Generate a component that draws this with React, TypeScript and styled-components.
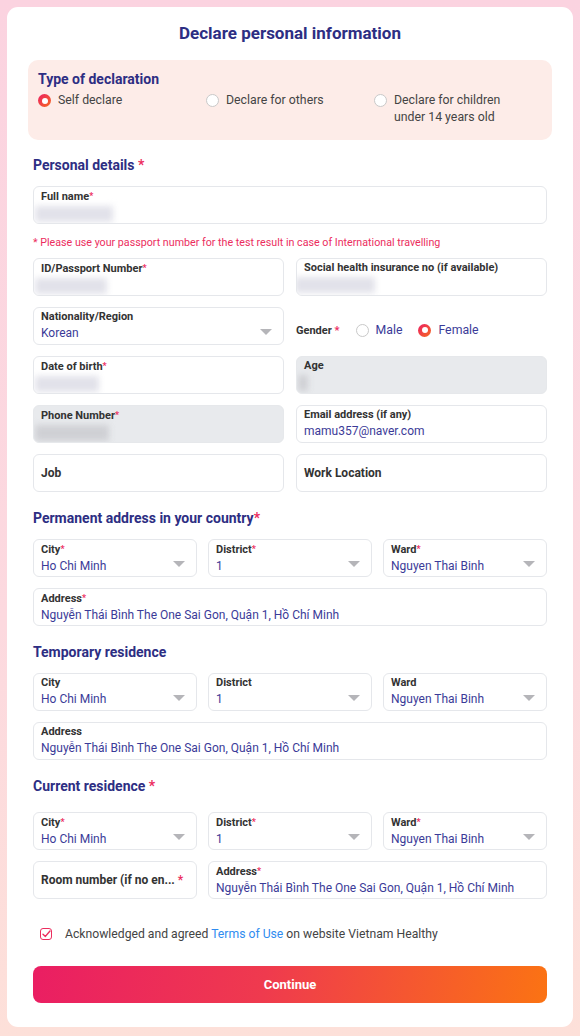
import styled, { createGlobalStyle } from 'styled-components';

const GlobalStyle = createGlobalStyle`
  html, body {
    margin: 0;
    padding: 0;
  }
  body {
    background: linear-gradient(180deg, #fbd3e0 0%, #fcd9df 60%, #fde0d9 100%);
    font-family: Roboto, 'Noto Sans', Arial, sans-serif;
    min-height: 1036px;
  }
`;

const NAVY = '#2d2e83';
const VALUE = '#3b3b98';
const RED = '#ec2d5e';

export default function App() {
  return (
    <>
      <GlobalStyle />
      <Page>
        <Card>
          <Title>Declare personal information</Title>

          <TypeBox>
            <TypeTitle>Type of declaration</TypeTitle>
            <TypeOptions>
              <RadioOption>
                <Radio $checked />
                <span>Self declare</span>
              </RadioOption>
              <RadioOption>
                <Radio />
                <span>Declare for others</span>
              </RadioOption>
              <RadioOption>
                <Radio />
                <span>
                  Declare for children
                  <br />
                  under 14 years old
                </span>
              </RadioOption>
            </TypeOptions>
          </TypeBox>

          <Form>
            <SectionTitle>
              Personal details <Star>*</Star>
            </SectionTitle>
            <Field>
              <Label>
                Full name<Dot>*</Dot>
              </Label>
              <Blur $w={78} />
            </Field>
            <Warning>* Please use your passport number for the test result in case of International travelling</Warning>
            <Row $cols={2}>
              <Field>
                <Label>
                  ID/Passport Number<Dot>*</Dot>
                </Label>
                <Blur $w={72} />
              </Field>
              <Field>
                <Label>Social health insurance no (if available)</Label>
                <Blur $w={80} $shift={-3} />
              </Field>
            </Row>
            <Row $cols={2}>
              <Field>
                <Label>Nationality/Region</Label>
                <Value>Korean</Value>
                <Caret />
              </Field>
              <GenderRow>
                <GenderLabel>
                  Gender <Star>*</Star>
                </GenderLabel>
                <GenderOption>
                  <Radio />
                  <span>Male</span>
                </GenderOption>
                <GenderOption>
                  <Radio $checked />
                  <span>Female</span>
                </GenderOption>
              </GenderRow>
            </Row>
            <Row $cols={2}>
              <Field>
                <Label>
                  Date of birth<Dot>*</Dot>
                </Label>
                <Blur $w={64} />
              </Field>
              <Field $disabled>
                <Label>Age</Label>
                <Blur $w={10} $dark />
              </Field>
            </Row>
            <Row $cols={2}>
              <Field $disabled>
                <Label>
                  Phone Number<Dot>*</Dot>
                </Label>
                <Blur $w={74} $dark />
              </Field>
              <Field>
                <Label>Email address (if any)</Label>
                <Value>mamu357@naver.com</Value>
              </Field>
            </Row>
            <Row $cols={2}>
              <Field $center>
                <Label $big>Job</Label>
              </Field>
              <Field $center>
                <Label $big>Work Location</Label>
              </Field>
            </Row>

            <SectionTitle>
              Permanent address in your country<Star>*</Star>
            </SectionTitle>
            <Row $cols={3}>
              <Field>
                <Label>
                  City<Dot>*</Dot>
                </Label>
                <Value>Ho Chi Minh</Value>
                <Caret />
              </Field>
              <Field>
                <Label>
                  District<Dot>*</Dot>
                </Label>
                <Value>1</Value>
                <Caret />
              </Field>
              <Field>
                <Label>
                  Ward<Dot>*</Dot>
                </Label>
                <Value>Nguyen Thai Binh</Value>
                <Caret />
              </Field>
            </Row>
            <Field>
              <Label>
                Address<Dot>*</Dot>
              </Label>
              <Value>Nguyễn Thái Bình The One Sai Gon, Quận 1, Hồ Chí Minh</Value>
            </Field>

            <SectionTitle>Temporary residence</SectionTitle>
            <Row $cols={3}>
              <Field>
                <Label>City</Label>
                <Value>Ho Chi Minh</Value>
                <Caret />
              </Field>
              <Field>
                <Label>District</Label>
                <Value>1</Value>
                <Caret />
              </Field>
              <Field>
                <Label>Ward</Label>
                <Value>Nguyen Thai Binh</Value>
                <Caret />
              </Field>
            </Row>
            <Field>
              <Label>Address</Label>
              <Value>Nguyễn Thái Bình The One Sai Gon, Quận 1, Hồ Chí Minh</Value>
            </Field>

            <SectionTitle $spaced>
              Current residence <Star>*</Star>
            </SectionTitle>
            <Row $cols={3}>
              <Field>
                <Label>
                  City<Dot>*</Dot>
                </Label>
                <Value>Ho Chi Minh</Value>
                <Caret />
              </Field>
              <Field>
                <Label>
                  District<Dot>*</Dot>
                </Label>
                <Value>1</Value>
                <Caret />
              </Field>
              <Field>
                <Label>
                  Ward<Dot>*</Dot>
                </Label>
                <Value>Nguyen Thai Binh</Value>
                <Caret />
              </Field>
            </Row>
            <RoomRow>
              <Field $center>
                <Label $big>
                  Room number (if no en... <Star>*</Star>
                </Label>
              </Field>
              <Field>
                <Label>
                  Address<Dot>*</Dot>
                </Label>
                <Value>Nguyễn Thái Bình The One Sai Gon, Quận 1, Hồ Chí Minh</Value>
              </Field>
            </RoomRow>

            <Agree>
              <CheckBox>
                <svg width="9" height="8" viewBox="0 0 9 8">
                  <path d="M1 4.2 L3.4 6.4 L8 1" fill="none" stroke={RED} strokeWidth="1.4" strokeLinecap="round" strokeLinejoin="round" />
                </svg>
              </CheckBox>
              <span>
                Acknowledged and agreed <TermsLink>Terms of Use</TermsLink> on website Vietnam Healthy
              </span>
            </Agree>

            <ContinueButton>Continue</ContinueButton>
          </Form>
        </Card>
      </Page>
    </>
  );
}

const Page = styled('div')`
  padding: 7px;
  box-sizing: border-box;
`;

const Card = styled('div')`
  background: #fff;
  border-radius: 11px;
  padding: 15px 21px 24px;
  box-sizing: border-box;
  min-height: 1020px;
`;

const Title = styled('h1')`
  margin: 0;
  font-size: 17px;
  line-height: 22px;
  font-weight: 700;
  color: ${NAVY};
  text-align: center;
`;

const TypeBox = styled('div')`
  margin-top: 16px;
  background: #fdece8;
  border-radius: 10px;
  padding: 10px 10px 14px;
  height: 80px;
  box-sizing: border-box;
`;

const TypeTitle = styled('div')`
  font-size: 14px;
  line-height: 18px;
  font-weight: 700;
  color: ${NAVY};
`;

const TypeOptions = styled('div')`
  display: grid;
  grid-template-columns: 168px 168px 1fr;
  margin-top: 4px;
`;

const RadioOption = styled('label')`
  display: flex;
  align-items: flex-start;
  gap: 7px;
  font-size: 12.3px;
  line-height: 17px;
  color: #444;
`;

const Radio = styled('span')<{ $checked?: boolean }>`
  flex: none;
  width: 13px;
  height: 13px;
  margin-top: 2px;
  border-radius: 50%;
  box-sizing: border-box;
  position: relative;
  ${({ $checked }) =>
    $checked
      ? `background: linear-gradient(135deg, #ec1e63, #f66b1f);`
      : `border: 1px solid #c9c9c9; background: #fff;`}
  &::after {
    content: '';
    display: ${({ $checked }) => ($checked ? 'block' : 'none')};
    position: absolute;
    inset: 3.5px;
    border-radius: 50%;
    background: #fff;
  }
`;

const Form = styled('div')`
  padding: 10px 5px 0;
  display: flex;
  flex-direction: column;
  gap: 11px;
`;

const SectionTitle = styled('h2')<{ $spaced?: boolean }>`
  margin: 5px 0 ${({ $spaced }) => ($spaced ? '5px' : '0')};
  font-size: 14px;
  line-height: 20px;
  font-weight: 700;
  color: ${NAVY};
`;

const Star = styled('span')`
  color: ${RED};
`;

const Dot = styled('span')`
  color: ${RED};
  font-size: 9px;
  vertical-align: 1px;
`;

const Row = styled('div')<{ $cols: number }>`
  display: grid;
  grid-template-columns: repeat(${({ $cols }) => $cols}, 1fr);
  gap: ${({ $cols }) => ($cols === 3 ? '11px' : '12px')};
`;

const RoomRow = styled('div')`
  display: grid;
  grid-template-columns: 164px 1fr;
  gap: 11px;
`;

const Field = styled('div')<{ $disabled?: boolean; $center?: boolean }>`
  position: relative;
  height: 38px;
  box-sizing: border-box;
  border: 1px solid ${({ $disabled }) => ($disabled ? '#e6e8eb' : '#e5e7eb')};
  background: ${({ $disabled }) => ($disabled ? '#e8eaed' : '#fff')};
  border-radius: 6px;
  padding: ${({ $center }) => ($center ? '0 7px' : '2px 7px 0')};
  display: flex;
  flex-direction: column;
  justify-content: ${({ $center }) => ($center ? 'center' : 'flex-start')};
  overflow: hidden;
`;

const Label = styled('div')<{ $big?: boolean }>`
  font-size: ${({ $big }) => ($big ? '12px' : '11px')};
  line-height: 14px;
  font-weight: 700;
  color: #333;
  white-space: nowrap;
`;

const Value = styled('div')`
  margin-top: 1px;
  font-size: 12px;
  line-height: 16px;
  color: ${VALUE};
  white-space: nowrap;
`;

const Blur = styled('div')<{ $w: number; $dark?: boolean; $shift?: number }>`
  width: ${({ $w }) => $w}px;
  height: 16px;
  margin-left: ${({ $shift }) => ($shift ?? 0) - 6}px;
  margin-top: 2px;
  background: ${({ $dark }) => ($dark ? '#cfd0d4' : '#e2e2ea')};
  filter: blur(3px);
`;

const Caret = styled('span')`
  position: absolute;
  right: 11px;
  top: 21px;
  width: 0;
  height: 0;
  border-left: 6px solid transparent;
  border-right: 6px solid transparent;
  border-top: 6px solid #b5b5b9;
`;

const GenderRow = styled('div')`
  display: flex;
  align-items: center;
  padding-top: 8px;
  font-size: 12.3px;
  color: ${VALUE};
`;

const GenderLabel = styled('span')`
  font-size: 11px;
  font-weight: 700;
  color: #333;
  margin-right: 16px;
`;

const GenderOption = styled('label')`
  display: flex;
  align-items: center;
  gap: 7px;
  margin-right: 16px;
  ${Radio} {
    margin-top: 0;
  }
`;

const Warning = styled('div')`
  margin: 1px 0 -3px;
  font-size: 10.7px;
  line-height: 14px;
  color: ${RED};
`;

const Agree = styled('label')`
  margin-top: 15px;
  display: flex;
  align-items: center;
  gap: 13px;
  padding-left: 7px;
  font-size: 12.2px;
  line-height: 18px;
  color: #444;
`;

const CheckBox = styled('span')`
  flex: none;
  width: 12px;
  height: 12px;
  box-sizing: border-box;
  border: 1.4px solid ${RED};
  border-radius: 3px;
  display: flex;
  align-items: center;
  justify-content: center;
`;

const TermsLink = styled('a')`
  color: #2f8cf0;
  text-decoration: none;
`;

const ContinueButton = styled('button')`
  margin-top: 12px;
  height: 37px;
  border: none;
  border-radius: 8px;
  background: linear-gradient(100deg, #ea1e63 0%, #ef3a4e 45%, #fb7313 100%);
  color: #fff;
  font-family: Roboto, 'Noto Sans', Arial, sans-serif;
  font-size: 13px;
  font-weight: 700;
  cursor: pointer;
`;
